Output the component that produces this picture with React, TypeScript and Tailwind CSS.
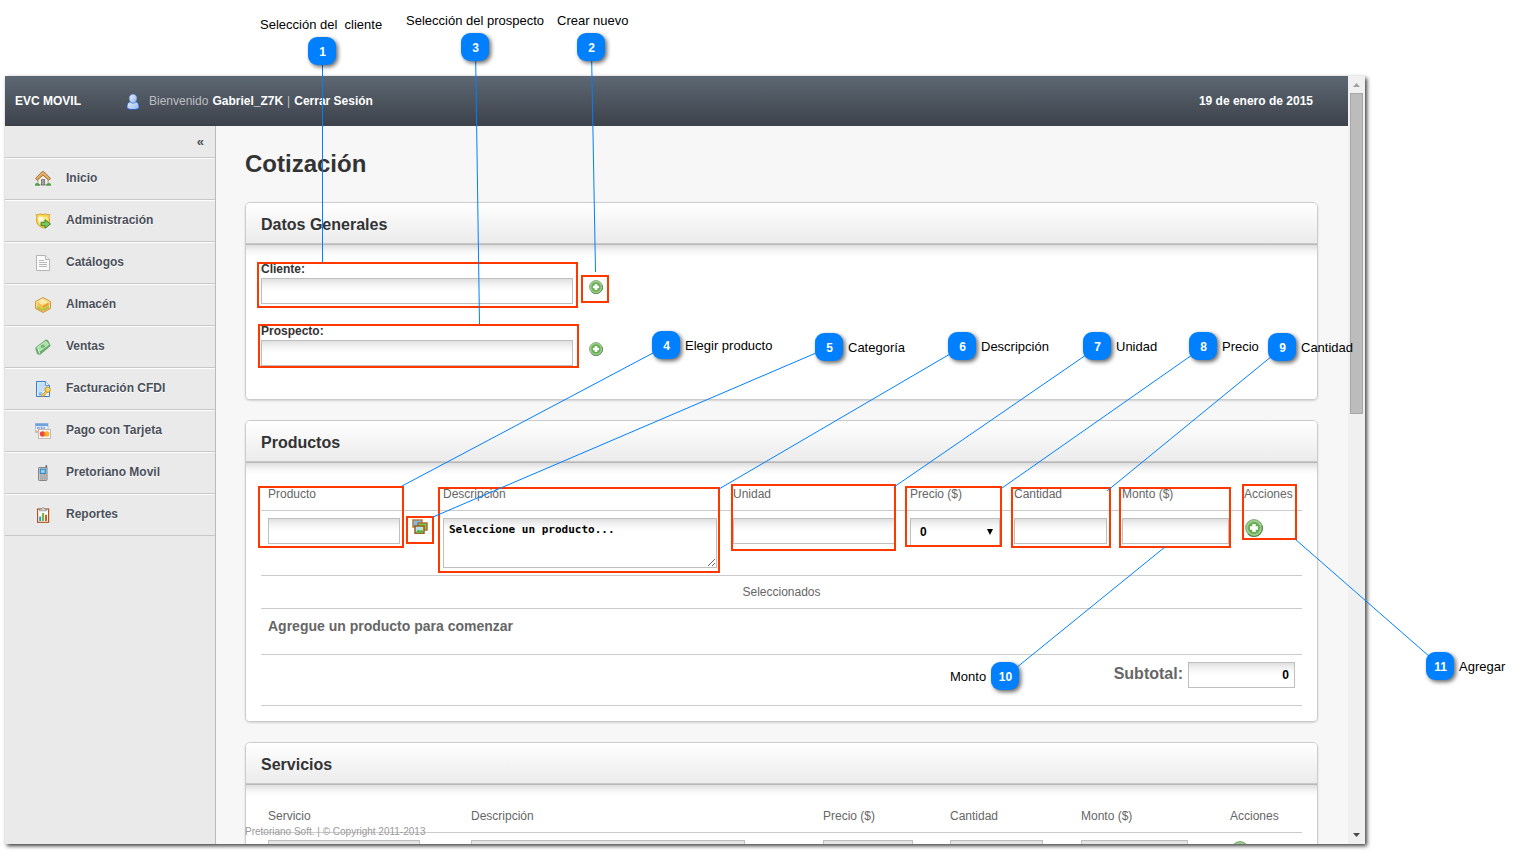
import React from "react";

type IconProps = { className?: string };

function UserIcon() {
  return (
    <svg width="14" height="16" viewBox="0 0 14 16" aria-hidden="true">
      <defs>
        <linearGradient id="userBlue" x1="0" y1="0" x2="1" y2="1">
          <stop offset="0" stopColor="#e8f2ff" />
          <stop offset="1" stopColor="#8fb2ee" />
        </linearGradient>
      </defs>
      <path d="M1 13.500c-.2-3 .6-4.700 2.600-5.600h6.800c2 .9 2.800 2.600 2.600 5.600-.3 1.500-2.700 2.100-6 2.100s-5.700-.6-6-2.100z" fill="url(#userBlue)" stroke="#2458b8" strokeWidth=".9" />
      <path d="M7 .5c2.300 0 3.600 1.500 3.600 3.600 0 1.900-.9 3.200-1.500 4.300-1.200.7-3 .7-4.200 0-.6-1.100-1.500-2.400-1.500-4.300C3.400 2 4.700.5 7 .5z" fill="url(#userBlue)" stroke="#83a9e6" strokeWidth=".8" />
      <path d="M4 8.200c1.700 1.300 4.300 1.300 6 0" stroke="#5d8bd4" strokeWidth=".8" fill="none" />
    </svg>
  );
}

function HomeIcon() {
  return (
    <svg width="16" height="16" viewBox="0 0 16 16" aria-hidden="true">
      <path d="M3 7.500 8 3l5 4.500V13.800H3z" fill="#f4f1ea" stroke="#9d978a" strokeWidth=".8" />
      <path d="M.5 7.500 6.500 1.200c.9-.8 2.100-.8 3 0l6 6.300-1.700 1.800L8 4.200 2.200 9.300z" fill="#dfa35d" stroke="#96602a" strokeWidth=".8" />
      <path d="M2 7.300 7.200 2.100c.5-.4 1.100-.4 1.600 0L14 7.300" fill="none" stroke="#f0c48c" strokeWidth=".7" />
      <rect x="6.500" y="8.700" width="3.200" height="5.200" fill="#a2a2a2" stroke="#6a6a6a" strokeWidth=".8" />
      <path d="M0 14.200c0-2 1.400-3 2.800-2.300 1 .3 1.500 1.100 2.200 2.300zM11 14.200c.7-1.200 1.200-2 2.200-2.300 1.400-.7 2.800.3 2.800 2.300z" fill="#5fae4d" />
      <path d="M0 14.100h5M11 14.100h5" stroke="#357f2f" strokeWidth=".8" />
    </svg>
  );
}

function ShieldIcon() {
  return (
    <svg width="16" height="16" viewBox="0 0 16 16" aria-hidden="true">
      <path d="M1 1.500c1.500.6 3 .1 4-.6.900.7 5.100.7 6 0 1 .7 2.500 1.200 4 .6-.8 1.400-1 2.600-.5 4 .8 4-1.800 7.900-6.500 9.500C3.300 13.400.7 9.500 1.500 5.500c.5-1.400.3-2.600-.5-4z" fill="#f8d650" stroke="#d29a28" strokeWidth=".9" />
      <path d="M3.500 3.700h9c.6 4.300-.9 7.400-4.500 9.400-3.600-2-5.100-5.100-4.500-9.400z" fill="#fdeb8c" />
      <path d="M8 3.700v9.400c-3.600-2-5.100-5.100-4.500-9.400z" fill="#fffbe2" />
      <path d="M6 9.200h4V6.700l5.500 4.300-5.500 4.300v-2.600H6z" fill="#80c45a" stroke="#34791f" strokeWidth=".9" />
    </svg>
  );
}

function PageIcon() {
  return (
    <svg width="16" height="16" viewBox="0 0 16 16" aria-hidden="true">
      <path d="M1.500.5h9l4 4v11h-13z" fill="#fbfbfb" stroke="#b5b5b5" />
      <path d="M10.500.5v4h4" fill="#eee" stroke="#b5b5b5" />
      <path d="M4 5.500h5M4 7.500h8M4 9.500h8M4 11.500h8" stroke="#b8b8b8" />
    </svg>
  );
}

function BoxIcon() {
  return (
    <svg width="16" height="16" viewBox="0 0 16 16" aria-hidden="true">
      <path d="M8 .5 15.500 4.500v7L8 15.500.5 11.500v-7z" fill="#fbe3a0" stroke="#c98a2a" strokeWidth=".9" />
      <path d="M8 2.500 13.800 5.200 8 8.300 2.200 5.200z" fill="#fbd768" />
      <path d="m4.500 3.500 2-1 6 3-2 1.200zM3.500 6l2-1 3 1.600L8 8.300z" fill="#fff3c8" />
      <path d="M2.200 5.200 8 8.300v3.200L2.200 8.500z" fill="#f6c04d" />
      <path d="M8 8.300l5.800-3.100v3.300L8 11.500z" fill="#e8a235" />
      <path d="m2 8.700 6 3 6-3v2l-6 3-6-3z" fill="#a4cc3c" />
      <path d="m1.800 11 6.200 3.200L14.200 11" fill="none" stroke="#e0a038" strokeWidth="1" />
    </svg>
  );
}

function MoneyIcon() {
  return (
    <svg width="16" height="16" viewBox="0 0 16 16" aria-hidden="true">
      <path d="M.7 9.500 10.800 1l2 .5 2.400 5.400L5.300 15.300 2.500 15z" fill="#6fb273" stroke="#559c5d" strokeWidth=".7" />
      <path d="M.7 8.500 10.800 1.200 14.900 5.400 4.600 13.200z" fill="#a9dca5" stroke="#5ba264" strokeWidth=".7" />
      <path d="m2.400 8.700 8.200-5.900 2.600 2.800-8.400 6z" fill="none" stroke="#d9f2d2" strokeWidth=".7" />
      <ellipse cx="7.800" cy="7.200" rx="2" ry="1.700" fill="#6db773" />
      <path d="m3.300 10.700 1.400 3.800" stroke="#e3f4df" strokeWidth="1" />
    </svg>
  );
}

function InvoiceIcon() {
  return (
    <svg width="16" height="16" viewBox="0 0 16 16" aria-hidden="true">
      <path d="M1.500.5h9l4 4v11h-13z" fill="#eef6fe" stroke="#3a7bc8" />
      <path d="M2.500 1.500h7.600v3.400h3.400V10L2.500 11z" fill="#c3dff8" />
      <path d="M10.500.5v4h4" fill="#f5faff" stroke="#3a7bc8" strokeWidth=".8" />
      <path d="M3.500 12h4M3.500 13.800h3" stroke="#2f98e8" strokeWidth="1" />
      <circle cx="12.600" cy="8.800" r="2.700" fill="#fbd04e" stroke="#bf8415" strokeWidth=".8" />
      <circle cx="13.300" cy="8" r=".8" fill="#fff" />
      <path d="m10.800 10.300-4.500 4.100.4 1.200h1.600l.4-1.200 1.200-.2.300-1.100 1.800-1.600z" fill="#fbd04e" stroke="#bf8415" strokeWidth=".7" />
    </svg>
  );
}

function CardsIcon() {
  return (
    <svg width="16" height="16" viewBox="0 0 16 16" aria-hidden="true">
      <rect x=".5" y=".5" width="12.500" height="9" fill="#f4f8ff" stroke="#a3b9dd" strokeWidth=".8" />
      <rect x=".5" y=".5" width="12.500" height="2.700" fill="#6f9fdd" />
      <path d="m2 4 .8 2 .8-2M4.700 4v2M7.500 4.200H6v.8h1.200v.9H5.800M8.400 6l.8-2 .9 2" fill="none" stroke="#5c83c4" strokeWidth=".7" />
      <rect x=".8" y="7.500" width="4" height="1.700" fill="#f0b75e" />
      <rect x="3.500" y="6.500" width="12" height="9" fill="#fbf8f6" stroke="#b9aaa3" strokeWidth=".8" />
      <circle cx="7.600" cy="11" r="2.800" fill="#ee4542" />
      <circle cx="11.600" cy="11" r="2.800" fill="#f9b42e" />
      <path d="M9.600 9a2.800 2.800 0 0 1 0 4 2.800 2.800 0 0 1 0-4z" fill="#ee7a30" />
    </svg>
  );
}

function PhoneIcon() {
  return (
    <svg width="16" height="16" viewBox="0 0 16 16" aria-hidden="true">
      <path d="M10.700.5H12V4h-1.300z" fill="#777" stroke="#555" strokeWidth=".4" />
      <rect x="3.500" y="2.500" width="8.500" height="13" rx=".8" fill="#c9c9c9" stroke="#7c7c7c" strokeWidth=".9" />
      <rect x="5.300" y="4.200" width="5" height="4.200" fill="#8fd3fb" stroke="#2581cc" strokeWidth="1" />
      <path d="M5.300 10h1.200M5.300 12h1.200M7.200 12h1.200M9.200 12h1.200M5.300 13.900h1.200M7.200 13.900h1.200M9.200 13.900h1.200" stroke="#7b7b7b" strokeWidth="1" />
      <path d="M7.200 10h1.200" stroke="#4fae3c" strokeWidth="1" />
      <path d="M9.200 10h1.200" stroke="#d8473d" strokeWidth="1" />
    </svg>
  );
}

function ReportIcon() {
  return (
    <svg width="16" height="16" viewBox="0 0 16 16" aria-hidden="true">
      <rect x="2.600" y="2" width="11" height="13.300" fill="#fff" stroke="#b0541f" strokeWidth="1.200" />
      <path d="M4.500 3.800V2.200h2c0-2 3.200-2 3.200 0h2v1.600z" fill="#d7d7d7" stroke="#858585" strokeWidth=".7" />
      <rect x="4.200" y="9.500" width="2" height="4.500" fill="#2e9ad0" />
      <rect x="7.100" y="6" width="2" height="8" fill="#6cb52d" />
      <rect x="10" y="7.800" width="2" height="6.200" fill="#d8562c" />
    </svg>
  );
}

function AddIcon({ className = "size-[14px]" }: IconProps) {
  return (
    <svg className={className} viewBox="0 0 18 18" aria-hidden="true">
      <circle cx="9" cy="9" r="8.300" fill="#a9cf9b" stroke="#7fae74" strokeWidth="1.200" />
      <path d="M3.200 15A8.300 8.300 0 0 0 17 6.700" fill="none" stroke="#55894c" strokeWidth="1.200" />
      <circle cx="9" cy="9" r="6.200" fill="#62ad4c" stroke="#8cc47b" strokeWidth=".7" />
      <path d="M7.300 5h3.400v2.300H13v3.400h-2.300V13H7.300v-2.300H5V7.300h2.300z" fill="#fff" />
    </svg>
  );
}

function PicturesIcon() {
  return (
    <svg width="16" height="16" viewBox="0 0 16 16" aria-hidden="true">
      <rect x="1" y="1" width="9" height="7" fill="#7db9f2" stroke="#b97c3a" strokeWidth="1.500" />
      <rect x="6" y="4" width="9" height="7" fill="#78c850" stroke="#ad6f2c" strokeWidth="1.500" />
      <rect x="3" y="7" width="9" height="7.200" fill="#b4e2fb" stroke="#9a5c1c" strokeWidth="1.500" />
      <path d="m3.800 13.400 2.200-3 2.200 1.400 1.400-1 1.600 1.400v1.200z" fill="#55b52e" />
      <circle cx="9.600" cy="9.200" r="1" fill="#fbe14c" />
    </svg>
  );
}

const menu = [
  { label: "Inicio", Icon: HomeIcon },
  { label: "Administración", Icon: ShieldIcon },
  { label: "Catálogos", Icon: PageIcon },
  { label: "Almacén", Icon: BoxIcon },
  { label: "Ventas", Icon: MoneyIcon },
  { label: "Facturación CFDI", Icon: InvoiceIcon },
  { label: "Pago con Tarjeta", Icon: CardsIcon },
  { label: "Pretoriano Movil", Icon: PhoneIcon },
  { label: "Reportes", Icon: ReportIcon },
];

const fieldClass =
  "block border border-[#bfbfbf] bg-[linear-gradient(to_bottom,#e0e0e0_0px,#f4f4f4_6px,#ffffff_12px)] px-[5px] text-xs font-bold text-black outline-none";

function TextField({ label, width, value }: { label: string; width: string; value?: string }) {
  return (
    <input
      type="text"
      aria-label={label}
      defaultValue={value}
      className={`${fieldClass} h-[26px] ${width} ${value ? "text-right" : ""}`}
    />
  );
}

function PriceSelect({ label }: { label: string }) {
  return (
    <div className="relative w-[90px]">
      <select aria-label={label} className={`${fieldClass} h-7 w-full appearance-none pl-[9px]`}>
        <option>0</option>
      </select>
      <svg className="pointer-events-none absolute top-[11px] right-[7px]" width="6" height="6" viewBox="0 0 6 6" aria-hidden="true">
        <path d="M0 0h6L3 6z" fill="#000" />
      </svg>
    </div>
  );
}

function Panel({ title, children }: { title: string; children: React.ReactNode }) {
  return (
    <section className="shrink-0 overflow-hidden rounded-[5px] border border-[#cccccc] bg-white shadow-[0_1px_2px_rgba(0,0,0,0.15)]">
      <h2 className="flex h-[41px] items-center border-b border-[#c8c8c8] bg-linear-to-b from-white to-[#ebebeb] px-[15px] pt-1 text-base leading-5 font-bold text-[#333333]">
        {title}
      </h2>
      <div className="border-t border-[#b9b9b9] bg-[linear-gradient(to_bottom,#dedede_0px,#f6f6f6_6px,#ffffff_12px)] px-[15px] pt-[15px] pb-[15px]">
        {children}
      </div>
    </section>
  );
}

function ClientField({ id, label }: { id: string; label: string }) {
  return (
    <div className="flex">
      <div className="w-[312px]">
        <label htmlFor={id} className="mb-px block text-xs leading-4 font-bold text-[#333333]">
          {label}
        </label>
        <input id={id} type="text" className={`${fieldClass} h-[26px] w-full`} />
      </div>
      <button type="button" aria-label={`Crear ${id}`} className="mt-[19px] ml-4 size-[14px]">
        <AddIcon />
      </button>
    </div>
  );
}

const thClass = "px-[7px] py-2 text-left text-xs leading-4 font-normal text-[#666666]";
const tdClass = "px-[7px] py-[7px] align-top";

function HeadRow({ names }: { names: string[] }) {
  return (
    <thead>
      <tr className="border-b border-[#cccccc]">
        {names.map((name) => (
          <th key={name} scope="col" className={thClass}>
            {name}
          </th>
        ))}
      </tr>
    </thead>
  );
}

function DescriptionArea({ value }: { value: string }) {
  return (
    <textarea
      aria-label="Descripción"
      defaultValue={value}
      className={`${fieldClass} h-[50px] w-[274px] resize pt-[3px] font-['DejaVu_Sans_Mono',monospace] text-[11px]! leading-4`}
    />
  );
}

function ProductsTable() {
  return (
    <table className="w-full table-fixed border-collapse">
      <colgroup>
        <col className="w-[175px]" />
        <col className="w-[290px]" />
        <col className="w-[177px]" />
        <col className="w-[104px]" />
        <col className="w-[108px]" />
        <col className="w-[122px]" />
        <col className="w-[65px]" />
      </colgroup>
      <HeadRow names={["Producto", "Descripción", "Unidad", "Precio ($)", "Cantidad", "Monto ($)", "Acciones"]} />
      <tbody>
        <tr className="border-b border-[#cccccc]">
          <td className={tdClass}>
            <div className="flex gap-3">
              <TextField label="Producto" width="w-[132px]" />
              <button type="button" aria-label="Categoría" className="mt-px size-4">
                <PicturesIcon />
              </button>
            </div>
          </td>
          <td className={tdClass}>
            <DescriptionArea value="Seleccione un producto..." />
          </td>
          <td className={tdClass}>
            <TextField label="Unidad" width="w-[163px]" />
          </td>
          <td className={tdClass}>
            <PriceSelect label="Precio" />
          </td>
          <td className={tdClass}>
            <TextField label="Cantidad" width="w-[93px]" />
          </td>
          <td className={tdClass}>
            <TextField label="Monto" width="w-[107px]" />
          </td>
          <td className={tdClass}>
            <button type="button" aria-label="Agregar producto" className="mt-px ml-px block">
              <AddIcon className="size-[18px]" />
            </button>
          </td>
        </tr>
        <tr className="border-b border-[#cccccc]">
          <td colSpan={7} className="py-2 text-center text-xs leading-4 text-[#666666]">
            Seleccionados
          </td>
        </tr>
        <tr className="border-b border-[#cccccc]">
          <td colSpan={7} className="px-[7px] pt-[7px] pb-[18px] text-sm leading-5 font-bold text-[#666666]">
            Agregue un producto para comenzar
          </td>
        </tr>
        <tr className="border-b border-[#cccccc]">
          <td colSpan={7} className="px-[7px] pt-[7px] pb-[17px]">
            <label className="flex justify-end gap-[5px] text-base leading-6 font-bold text-[#666666]">
              Subtotal:
              <TextField label="Subtotal" width="w-[107px]" value="0" />
            </label>
          </td>
        </tr>
      </tbody>
    </table>
  );
}

function ServicesTable() {
  return (
    <table className="w-full table-fixed border-collapse">
      <colgroup>
        <col className="w-[203px]" />
        <col className="w-[352px]" />
        <col className="w-[127px]" />
        <col className="w-[131px]" />
        <col className="w-[149px]" />
        <col className="w-[79px]" />
      </colgroup>
      <HeadRow names={["Servicio", "Descripción", "Precio ($)", "Cantidad", "Monto ($)", "Acciones"]} />
      <tbody>
        <tr className="border-b border-[#cccccc]">
          <td className={tdClass}>
            <TextField label="Servicio" width="w-[152px]" />
          </td>
          <td className={tdClass}>
            <DescriptionArea value="" />
          </td>
          <td className={tdClass}>
            <PriceSelect label="Precio del servicio" />
          </td>
          <td className={tdClass}>
            <TextField label="Cantidad de servicios" width="w-[93px]" />
          </td>
          <td className={tdClass}>
            <TextField label="Monto del servicio" width="w-[107px]" />
          </td>
          <td className={tdClass}>
            <button type="button" aria-label="Agregar servicio" className="mt-px ml-px block">
              <AddIcon className="size-[18px]" />
            </button>
          </td>
        </tr>
      </tbody>
    </table>
  );
}

// Callouts: badge corner (bx, by), label corner (lx, ly), pointer line and highlighted box [x, y, w, h].
const callouts = [
  { n: 1, text: "Selección del  cliente", bx: 308, by: 37, lx: 260, ly: 17, line: [322.5, 64, 322.5, 262], box: [257, 262, 321, 46] },
  { n: 2, text: "Crear nuevo", bx: 577, by: 33, lx: 557, ly: 13, line: [591.7, 61, 595.5, 272], box: [581, 275, 28, 28] },
  { n: 3, text: "Selección del prospecto", bx: 461, by: 33, lx: 406, ly: 13, line: [475.7, 61, 479.5, 324], box: [258, 324, 321, 44] },
  { n: 4, text: "Elegir producto", bx: 652, by: 331, lx: 685, ly: 338, line: [653, 353, 402, 486], box: [258, 486, 146, 62] },
  { n: 5, text: "Categoría", bx: 815, by: 333, lx: 848, ly: 340, line: [816, 353, 433, 517], box: [406, 516, 28, 28] },
  { n: 6, text: "Descripción", bx: 948, by: 332, lx: 981, ly: 339, line: [950, 354, 719, 489], box: [438, 487, 282, 86] },
  { n: 7, text: "Unidad", bx: 1083, by: 332, lx: 1116, ly: 339, line: [1086, 355, 894, 487], box: [731, 484, 165, 67] },
  { n: 8, text: "Precio", bx: 1189, by: 332, lx: 1222, ly: 339, line: [1192, 355, 1002, 488], box: [905, 486, 97, 61] },
  { n: 9, text: "Cantidad", bx: 1268, by: 333, lx: 1301, ly: 340, line: [1272, 356, 1107, 491], box: [1011, 487, 100, 61] },
  { n: 10, text: "Monto", bx: 991, by: 662, lx: 950, ly: 669, line: [1165, 547, 1016, 668], box: [1119, 487, 112, 61] },
  { n: 11, text: "Agregar", bx: 1426, by: 652, lx: 1459, ly: 659, line: [1295, 539, 1430, 657], box: [1242, 484, 55, 56] },
];

function Callouts() {
  return (
    <div className="pointer-events-none absolute inset-0">
      {callouts.map(({ n, box: [x, y, w, h] }) => (
        <div key={n} className="absolute border-2 border-[#ff3800]" style={{ left: x, top: y, width: w, height: h }} />
      ))}
      <svg className="absolute inset-0 size-full" aria-hidden="true">
        {callouts.map(({ n, line: [x1, y1, x2, y2] }) => (
          <line key={n} x1={x1} y1={y1} x2={x2} y2={y2} stroke="#0080ff" strokeWidth="1" />
        ))}
      </svg>
      {callouts.map(({ n, text, bx, by, lx, ly }) => (
        <React.Fragment key={n}>
          <span
            className="absolute flex size-7 items-center justify-center rounded-[9px] bg-[#0080ff] pt-[2px] pl-px text-xs leading-4 font-bold text-white shadow-[2px_2px_4px_rgba(0,0,0,0.6)]"
            style={{ left: bx, top: by }}
          >
            {n}
          </span>
          <span className="absolute text-[13px] leading-4 whitespace-pre text-black" style={{ left: lx, top: ly }}>
            {text}
          </span>
        </React.Fragment>
      ))}
    </div>
  );
}

function ScrollBar() {
  return (
    <div className="flex w-[17px] shrink-0 flex-col items-center bg-[#f0f0f0]" aria-hidden="true">
      <div className="flex h-[17px] items-center justify-center">
        <svg width="7" height="4" viewBox="0 0 7 4">
          <path d="M0 4 3.500 0 7 4z" fill="#a0a0a0" />
        </svg>
      </div>
      <div className="h-[321px] w-[13px] border border-[#a8a8a8] bg-[#bcbcbc]" />
      <div className="mt-auto flex h-[19px] items-center justify-center">
        <svg width="7" height="4" viewBox="0 0 7 4">
          <path d="M0 0h7L3.500 4z" fill="#4a4a4a" />
        </svg>
      </div>
    </div>
  );
}

export default function App() {
  return (
    <div className="relative flex h-screen flex-col overflow-hidden bg-white pt-[76px] pr-[155px] pb-[9px] pl-[5px] font-['Liberation_Sans',Arial,sans-serif]">
      <div className="flex min-h-0 flex-1 shadow-[2px_2px_4px_rgba(0,0,0,0.75)]">
        <div className="flex min-w-0 flex-1 flex-col">
          <header className="flex h-[50px] shrink-0 items-center bg-linear-to-b from-[#5d6873] to-[#3d424b] pr-[35px] pl-[10px] text-xs leading-4 font-bold text-white">
            <span className="w-[111px]">EVC MOVIL</span>
            <span className="mt-px mr-[9px]">
              <UserIcon />
            </span>
            <p className="flex gap-1">
              <span className="font-normal text-[#bdbfc2]">Bienvenido</span>
              <a href="#perfil">Gabriel_Z7K</a>
              <span className="font-normal text-[#bdbfc2]">|</span>
              <a href="#salir">Cerrar Sesión</a>
            </p>
            <time dateTime="2015-01-19" className="ml-auto">
              19 de enero de 2015
            </time>
          </header>
          <div className="flex min-h-0 flex-1">
            <nav className="w-[211px] shrink-0 border-r border-[#bbbbbb] bg-[#eaeaea] text-[#4a4f5a] shadow-[1px_0_3px_rgba(0,0,0,0.12)]">
              <div className="flex h-8 justify-end border-b border-[#c8c8c8] pt-2 pr-[11px]">
                <button type="button" aria-label="Contraer menú" className="h-4 text-[13px] leading-4 font-bold">
                  «
                </button>
              </div>
              <ul>
                {menu.map(({ label, Icon }) => (
                  <li key={label} className="border-t border-b border-t-white border-b-[#c8c8c8]">
                    <a href="#menu" className="flex h-10 gap-[15px] pt-[11px] pl-[30px] text-xs leading-4 font-bold [text-shadow:0_1px_0_#ffffff]">
                      <span className="mt-px size-4">
                        <Icon />
                      </span>
                      {label}
                    </a>
                  </li>
                ))}
              </ul>
            </nav>
            <main className="relative flex min-w-0 flex-1 flex-col gap-5 overflow-hidden bg-[#f7f7f7] pt-[22px] pr-[30px] pl-[29px]">
              <h1 className="mb-[2px] shrink-0 text-2xl leading-8 font-bold text-[#333333]">Cotización</h1>
              <Panel title="Datos Generales">
                <div className="flex flex-col gap-[19px] pt-px pb-[18px]">
                  <ClientField id="cliente" label="Cliente:" />
                  <ClientField id="prospecto" label="Prospecto:" />
                </div>
              </Panel>
              <Panel title="Productos">
                <ProductsTable />
              </Panel>
              <Panel title="Servicios">
                <ServicesTable />
              </Panel>
              <footer className="absolute bottom-1 left-[29px] text-[10px] leading-4 text-[#999999]">
                Pretoriano Soft. | © Copyright 2011-2013
              </footer>
            </main>
          </div>
        </div>
        <ScrollBar />
      </div>
      <Callouts />
    </div>
  );
}
